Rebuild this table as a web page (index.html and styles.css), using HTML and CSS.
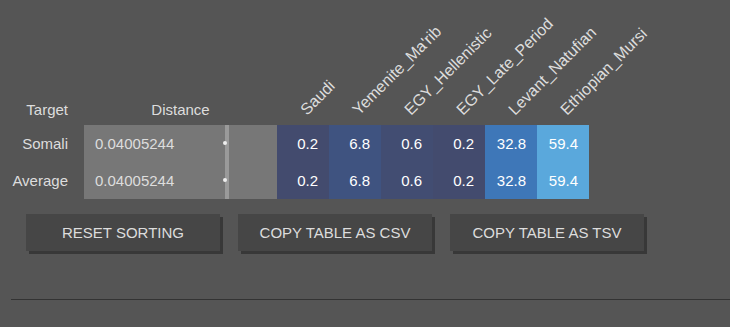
FILE: index.html
```html
<!DOCTYPE html>
<html lang="en">
<head>
    <meta charset="UTF-8">
    <meta name="viewport" content="width=device-width, initial-scale=1.0">
    <title>Distance Results</title>
    <link rel="stylesheet" href="styles.css">
</head>
<body>

    <!-- Results table -->
    <table class="results">
        <colgroup>
            <col class="w-target">
            <col class="w-distance">
            <col class="w-pop" span="6">
        </colgroup>
        <thead>
            <tr>
                <th class="col-target">Target</th>
                <th class="col-distance">Distance</th>
                <th class="col-pop"><span class="rotated">Saudi</span></th>
                <th class="col-pop"><span class="rotated">Yemenite_Ma'rib</span></th>
                <th class="col-pop"><span class="rotated">EGY_Hellenistic</span></th>
                <th class="col-pop"><span class="rotated">EGY_Late_Period</span></th>
                <th class="col-pop"><span class="rotated">Levant_Natufian</span></th>
                <th class="col-pop"><span class="rotated">Ethiopian_Mursi</span></th>
            </tr>
        </thead>
        <tbody>
            <tr>
                <td class="target">Somali</td>
                <td class="distance">0.04005244<span class="marker"></span></td>
                <td class="val c-low">0.2</td>
                <td class="val c-yem">6.8</td>
                <td class="val c-hel">0.6</td>
                <td class="val c-low">0.2</td>
                <td class="val c-lev">32.8</td>
                <td class="val c-eth">59.4</td>
            </tr>
            <tr>
                <td class="target">Average</td>
                <td class="distance">0.04005244<span class="marker"></span></td>
                <td class="val c-low">0.2</td>
                <td class="val c-yem">6.8</td>
                <td class="val c-hel">0.6</td>
                <td class="val c-low">0.2</td>
                <td class="val c-lev">32.8</td>
                <td class="val c-eth">59.4</td>
            </tr>
        </tbody>
    </table>

    <div class="actions">
        <button>Reset sorting</button>
        <button>Copy table as CSV</button>
        <button>Copy table as TSV</button>
    </div>

    <hr class="divider">

</body>
</html>
```

FILE: styles.css
```css
body {
    font-family: "Liberation Sans", Arial, sans-serif;
    font-size: 15px;
    margin: 0;
    background-color: #555;
    color: #ddd;
}

/* Table */
.results {
    border-collapse: collapse;
    border-spacing: 0;
    table-layout: fixed;
    width: 589px;
}

.w-target {
    width: 84px;
}

.w-distance {
    width: 193px;
}

.w-pop {
    width: 52px;
}

.results th {
    font-weight: normal;
    height: 125px;
    padding: 0 0 7px 0;
    vertical-align: bottom;
    box-sizing: border-box;
}

.col-target {
    text-align: right;
    padding-right: 16px !important;
}

.col-distance {
    text-align: center;
}

.col-pop {
    text-align: left;
    white-space: nowrap;
}

/* Column names stand at 45 degrees over the value columns */
.rotated {
    display: inline-block;
    width: 0;
    margin-left: 32px;
    font-size: 16px;
    transform: rotate(-45deg);
    transform-origin: left bottom;
    line-height: 17px;
}

.results td {
    height: 37px;
    padding: 0 11px;
    box-sizing: border-box;
    white-space: nowrap;
}

.results td.target {
    text-align: right;
    padding: 0 16px 0 0;
}

.distance {
    position: relative;
    background-color: #777;
}

/* Distance marker */
.marker {
    position: absolute;
    top: 0;
    bottom: 0;
    left: 141px;
    width: 4px;
    background-color: #9a9a9a;
}

.marker::before {
    content: "";
    position: absolute;
    top: 16px;
    left: -2px;
    width: 4px;
    height: 4px;
    border-radius: 50%;
    background-color: #eee;
}

.val {
    text-align: right;
    color: #fff;
}

.c-low {
    background-color: #434b6e;
}

.c-yem {
    background-color: #3f5380;
}

.c-hel {
    background-color: #424d72;
}

.c-lev {
    background-color: #3e77b8;
}

.c-eth {
    background-color: #5aa8dc;
}

/* Buttons */
.actions {
    display: flex;
    gap: 18px;
    padding: 15px 0 0 26px;
}

.actions button {
    width: 194px;
    height: 37px;
    background-color: #464646;
    color: #ddd;
    border: none;
    border-radius: 0;
    box-shadow: 3px 3px 0 #383838;
    font-family: "Liberation Sans", Arial, sans-serif;
    font-size: 15px;
    text-transform: uppercase;
    cursor: pointer;
}

.actions button:hover {
    background-color: #4e4e4e;
}

.divider {
    margin: 48px 0 0 11px;
    border: none;
    border-top: 1px solid #333;
}
```
